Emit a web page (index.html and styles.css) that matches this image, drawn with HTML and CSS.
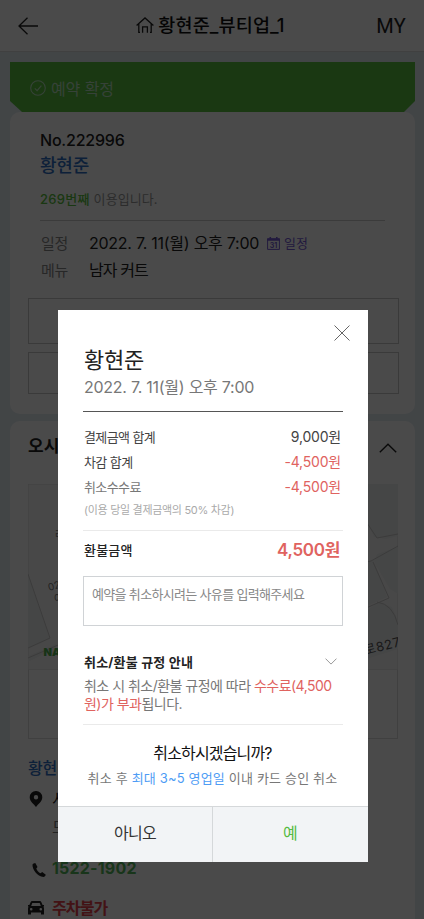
FILE: index.html
```html
<!DOCTYPE html>
<html lang="ko">
<head>
<meta charset="utf-8">
<meta name="viewport" content="width=device-width, initial-scale=1">
<title>예약 취소</title>
<link rel="stylesheet" href="styles.css">
</head>
<body>
<div class="page">
  <header class="topbar">
    <svg class="back" viewBox="0 0 20 18" width="20" height="18"><path d="M9.500.8 1 9l8.500 8.200M1 9h19"/></svg>
    <h1 class="shop">
      <svg viewBox="0 0 18 16" width="18" height="16"><path d="M.6 8.600 9 1l8.400 7.600M2.800 7V15.300H4M15.200 7V15.300H14M6.600 15.800V9.800h4.800V15.800"/></svg>
      <span>황현준_뷰티업_1</span>
    </h1>
    <span class="my">MY</span>
  </header>
  <div class="banner">
    <svg viewBox="0 0 16 16" width="16" height="16"><circle cx="8" cy="8" r="7.300"/><path d="m4.800 8.300 2.300 2.300 4.300-5"/></svg>
    <span>예약 확정</span>
  </div>
  <section class="card booking">
    <div class="number">No.222996</div>
    <div class="client">황현준</div>
    <div class="visits"><b>269번째</b> 이용입니다.</div>
    <hr class="rule">
    <div class="row"><span class="label">일정</span><span class="when">2022. 7. 11(월) 오후 7:00</span>
      <svg class="cal" viewBox="0 0 13 13" width="13" height="13"><path class="frame" d="M.6 2h11.800v10.400H.6z"/><path class="bar" d="M.2 1.200h12.600v2.600H.2zM2.500 0h1.600v2H2.500zM9 0h1.600v2H9z"/><text x="6.500" y="10.800">31</text></svg>
      <span class="sched">일정</span></div>
    <div class="row"><span class="label">메뉴</span><span class="menu">남자 커트</span></div>
    <div class="slot tall"></div>
    <div class="slot"></div>
  </section>
  <section class="card directions">
    <div class="head"><span>오시</span>
      <svg viewBox="0 0 18 10" width="18" height="10"><path d="m.8 9.200 8.200-8 8.200 8"/></svg></div>
    <svg class="map" viewBox="0 0 370 186" width="370" height="186">
      <rect width="370" height="186" class="land"/>
      <path class="block" d="M333 0 336 32 346 53 358 55 370 52V0zM370 63 349 70 346 78 362 105 370 110zM331 79 346 76 359 113 330 126zM329 133 351 118 364 123 370 137V165L329 178zM0 90 22 155 0 165zM0 172 28 160V164L0 178z"/>
      <path class="street" d="M331 0 337 36 349 54 370 50M324 81 343 77 370 62M345 78 361 114 329 128M349 118Q365 120 370 141M0 90 22 154 0 164M0 174 30 161"/>
      <text class="poi" x="27" y="54">라</text>
      <text class="poi" x="21" y="107" transform="rotate(-15 21 107)">02</text>
      <text class="poi" x="26" y="118">여</text>
      <text class="road" x="325" y="174" transform="rotate(-14 325 174)">성로827</text>
      <text class="brand" x="15.500" y="172">NA</text>
    </svg>
    <div class="actions"></div>
    <div class="place">황현</div>
    <div class="info address">
      <svg viewBox="0 0 14 16" width="14" height="16"><path fill-rule="evenodd" d="M7 0a6.200 6.200 0 0 0-6.300 6.200C.7 10.500 5 13 7 16c2-3 6.300-5.500 6.300-9.800A6.200 6.200 0 0 0 7 0zm0 4a2.200 2.200 0 1 1 0 4.400A2.200 2.200 0 0 1 7 4z"/></svg>
      <span>서</span></div>
    <div class="info street-name"><span>도</span></div>
    <div class="info phone">
      <svg viewBox="0 0 14 14" width="14" height="14"><path d="M.5 1.500C0 6 5 13.500 11.500 14c1 0 2-1.200 2.300-2.200L10.200 9 8.500 10.300C6.500 9.500 5 7.500 4.300 5.500L5.500 4 3.300 0C2 .1 1 .6.5 1.500z"/></svg>
      <span>1522-1902</span></div>
    <div class="info parking">
      <svg viewBox="0 0 16 14" width="16" height="14"><path fill-rule="evenodd" d="M4.500 0h7c1 0 1.500.4 1.900 1.200L14.600 4H16v1.500h-.7c.5.6.7 1.200.7 2V13.500h-3V11.500H3V13.500H0v-6c0-.8.200-1.400.700-2H0V4h1.400l1.200-2.800C3 .4 3.500 0 4.500 0zM4.300 2 3.200 5h9.600L11.700 2zM3.200 7a1.300 1.300 0 1 0 0 2.600 1.300 1.300 0 0 0 0-2.600zm9.600 0a1.300 1.300 0 1 0 0 2.600 1.300 1.300 0 0 0 0-2.600z"/></svg>
      <span>주차불가</span></div>
  </section>
</div>
<div class="backdrop">
  <div class="dialog" role="dialog">
    <svg class="close" viewBox="0 0 16 16" width="16" height="16"><path d="m.5.5 15 15m0-15-15 15"/></svg>
    <div class="content">
      <h2>황현준</h2>
      <div class="date">2022. 7. 11(월) 오후 7:00</div>
      <hr class="strong">
      <div class="line"><span>결제금액 합계</span><span class="amount">9,000원</span></div>
      <div class="line"><span>차감 합계</span><span class="amount red">-4,500원</span></div>
      <div class="line fee"><span>취소수수료</span><span class="amount red">-4,500원</span></div>
      <div class="small">(이용 당일 결제금액의 50% 차감)</div>
      <hr>
      <div class="refund"><span>환불금액</span><span class="total">4,500원</span></div>
      <div class="reason">예약을 취소하시려는 사유를 입력해주세요</div>
      <div class="policy-head"><span>취소/환불 규정 안내</span>
        <svg viewBox="0 0 12 7" width="12" height="7"><path d="m.5.600 5.500 5.500 5.500-5.500"/></svg></div>
      <p class="policy">취소 시 취소/환불 규정에 따라 <em>수수료(4,500<br>원)가 부과</em>됩니다.</p>
      <hr class="end">
      <div class="question">취소하시겠습니까?</div>
      <div class="notice">취소 후 <i>최대 3~5 영업일</i> 이내 카드 승인 취소</div>
    </div>
    <footer><span>아니오</span><span class="yes">예</span></footer>
  </div>
</div>
</body>
</html>
```
FILE: styles.css
```css
* { box-sizing: border-box; }
html, body { height: 100%; overflow: hidden; }
body { margin: 0; font-family: Inter, "Noto Sans CJK KR", sans-serif; background: #e4ecf2; color: #222; white-space: nowrap; }
svg { display: block; flex: none; }
h1, h2, p { margin: 0; font-weight: 400; }
.page { height: 919px; overflow: hidden; }
.topbar { display: grid; grid-template-columns: 60px 1fr 60px; align-items: center; height: 52px; background: #fff; padding: 0 18px; border-bottom: 1px solid #ddd; }
.topbar svg { fill: none; stroke: #222; stroke-width: 1.3; }
.shop { display: flex; align-items: center; justify-content: center; gap: 4px; margin-top: -3px; padding-right: 3px; font-size: 18.5px; font-weight: 500; letter-spacing: .15px; color: #111; }
.shop svg { margin-top: 2px; }
.my { text-align: right; font-size: 20px; font-family: Roboto, sans-serif; letter-spacing: .3px; }
.banner { display: flex; align-items: center; gap: 5px; height: 50px; margin: 10px 9px 0 10px; padding: 2px 0 0 20px; background: #5ac13e; color: #b9e2c0; font-size: 16px; letter-spacing: -.1px; clip-path: polygon(0 0, 100% 0, 100% 78%, 394px 100%, 12px 100%, 0 78%); }
.banner svg { fill: none; stroke: #b9e2c0; stroke-width: 1.1; }
.card { margin: 0 9px 0 10px; background: #fff; border-radius: 10px; }
.booking { height: 302px; padding: 15px 30px 0; }
.number, .client, .visits, .row { line-height: 26px; }
.number { font-size: 16px; font-weight: 500; letter-spacing: -.2px; }
.client { font-size: 18px; font-weight: 500; color: #2f6fc4; letter-spacing: -.2px; }
.visits { margin-top: 7px; font-size: 13px; color: #999; letter-spacing: .1px; }
.visits b { font-weight: 500; color: #5ac13e; letter-spacing: .3px; }
hr { border: 0; height: 1px; margin: 10px 0 0; background: #eaeaea; }
.rule { margin: 8px 0 9px; background: #ccc; }
.row { display: flex; align-items: center; height: 27px; line-height: 25px; font-size: 16px; }
.when, .date { letter-spacing: -.26px; }
.menu { letter-spacing: -.9px; }
.label { width: 49px; padding-left: 1px; font-size: 15px; color: #888; letter-spacing: -.2px; }
.cal { margin: 0 4px 0 8px; }
.cal .frame { fill: none; stroke: #765bd6; }
.cal .bar { fill: #765bd6; }
.cal text { font-size: 7px; font-weight: 700; text-anchor: middle; fill: #765bd6; }
.sched { font-size: 13px; color: #765bd6; }
.slot { height: 42px; margin: 8px -14px 0 -12px; border: 1px solid #c8c8c8; }
.slot.tall { height: 46px; margin-top: 14px; }
.directions { height: 510px; margin-top: 7px; padding: 11px 18px 0; }
.head { display: flex; align-items: center; justify-content: space-between; height: 28px; line-height: 26px; font-size: 17px; font-weight: 700; }
.head span { margin-top: -1px; }
.head svg { fill: none; stroke: #222; stroke-width: 1.4; margin-top: 3px; }
.map { margin-top: 24px; }
.map .land { fill: #f8f8f8; stroke: #ddd; }
.map .block { fill: #eeefef; }
.map .street { fill: none; stroke: #ccc; }
.map .poi { font-size: 10px; fill: #777; }
.map .road { font-size: 13px; fill: #555; letter-spacing: .5px; }
.map .brand { font-size: 11px; font-weight: 900; fill: #4faf50; }
.actions { height: 69px; width: 370px; border: 1px solid #ddd; border-top: 0; }
.place { margin-top: 16px; line-height: 26px; font-size: 16px; font-weight: 500; color: #2f6fc4; letter-spacing: -.3px; }
.info { display: flex; align-items: center; height: 28px; font-size: 16px; line-height: 28px; }
.info span { margin-left: auto; width: 345px; }
.address { margin-top: 4px; padding-left: 1px; }
.street-name { color: #777; }
.phone { margin-top: 13px; padding-left: 4px; font-weight: 700; color: #55b65b; letter-spacing: .2px; }
.phone svg { margin-top: 3px; }
.parking { margin-top: 12px; font-weight: 700; color: #e5434b; letter-spacing: -.9px; }
.info svg { fill: #222; }
.backdrop { position: absolute; inset: 0; background: rgba(0, 0, 0, .71); padding: 310px 56px 0 58px; }
.dialog { position: relative; height: 552px; display: flex; flex-direction: column; background: #fff; }
.close { position: absolute; right: 18px; top: 15px; stroke: #666; fill: none; }
.content { flex: 1; padding: 35px 25px 0; }
h2 { margin-left: 1px; line-height: 30px; font-size: 22px; letter-spacing: -.2px; }
.date { margin-left: 1px; line-height: 24px; font-size: 16px; color: #777; }
.strong { margin: 12px 0 12px; background: #555; }
.line, .refund, .policy-head { display: flex; align-items: center; justify-content: space-between; margin: 0 2px 0 1px; }
.line { height: 25px; font-size: 13px; color: #444; letter-spacing: -.6px; }
.fee { color: #777; }
.amount { margin-top: -1px; font-size: 14px; letter-spacing: -.2px; }
.red { color: #e0635f; }
.small { height: 21px; line-height: 22px; margin-left: 1px; font-size: 11px; color: #aaa; letter-spacing: -.3px; }
.refund { height: 37px; font-size: 13px; font-weight: 500; color: #222; letter-spacing: .2px; }
.total { margin-top: -2px; padding-right: 1px; font-size: 17px; font-weight: 600; color: #e0635f; letter-spacing: -.3px; }
.reason { height: 50px; margin-top: 8px; border: 1px solid #d0d3d6; padding: 5px 8px; font-size: 13px; line-height: 24px; color: #888; letter-spacing: -.67px; }
.policy-head { margin-top: 23px; padding-right: 4px; height: 24px; font-size: 13px; font-weight: 700; color: #222; letter-spacing: .2px; }
.policy-head svg { fill: none; stroke: #999; }
.policy { margin: 4px 0 0 1px; font-size: 14px; line-height: 18px; color: #777; letter-spacing: -.52px; }
.end { margin-top: 11px; }
em, i { font-style: normal; }
em { color: #e0635f; }
i { color: #4e9cf5; }
.question { margin-top: 15px; line-height: 26px; font-size: 16px; text-align: center; color: #111; letter-spacing: -.85px; padding-right: 1px; }
.notice { line-height: 24px; font-size: 13px; text-align: center; color: #777; letter-spacing: .17px; padding-right: 1px; }
footer { display: grid; grid-template-columns: 154px 1fr; height: 56px; border-top: 1px solid #d5d8da; background: #f2f4f6; text-align: center; line-height: 53px; font-size: 16px; color: #333; letter-spacing: -.7px; }
.yes { border-left: 1px solid #d5d8da; color: #55bb42; padding-right: 1px; }
```
